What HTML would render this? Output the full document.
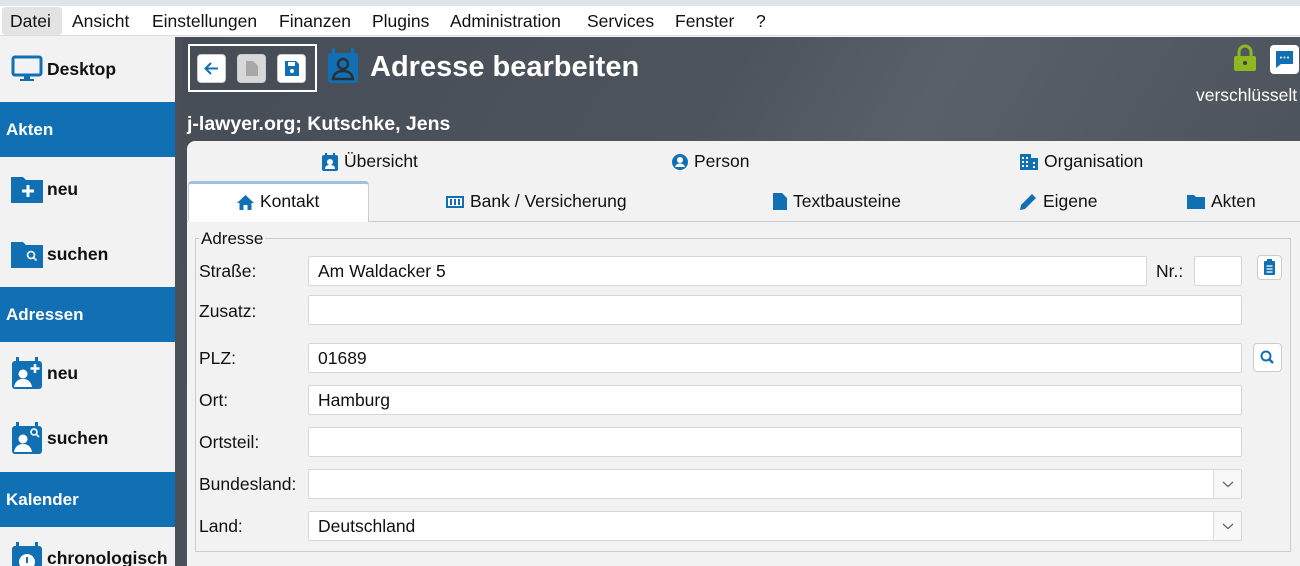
<!DOCTYPE html>
<html><head><meta charset="utf-8"><style>
*{box-sizing:border-box;margin:0;padding:0}
html,body{width:1300px;height:566px;overflow:hidden}
body{font-family:"Liberation Sans",sans-serif;background:#f2f2f2;position:relative;color:#111}
.abs{position:absolute}
#top{left:0;top:0;width:1300px;height:6px;background:#dfe4ec}
#menu{left:0;top:6px;width:1300px;height:30px;background:#fff;border-bottom:1px solid #ddd;font-size:17.5px}
#menu span{position:absolute;top:5px}
#side{left:0;top:37px;width:175px;height:529px;background:#f2f2f2}
#gap{left:175px;top:37px;width:8px;height:529px;background:#4a4f58}
.sh{position:absolute;left:0;width:175px;height:55px;background:#1170b4;color:#fff;font-weight:bold;font-size:17px;padding:18px 0 0 6px}
.si{position:absolute;left:11px;font-weight:bold;font-size:17.5px;display:flex;align-items:center;gap:4px}
#hdr{left:183px;top:37px;width:1117px;height:529px;background:linear-gradient(120deg,#474d57 0%,#4e545e 40%,#5a606a 55%,#464c56 100%)}
.tb{position:absolute;top:54px;width:29px;height:29px;background:#fff;border-radius:4px;border:1px solid #ccc}
#panel{left:187px;top:141px;width:1113px;height:425px;background:#f2f2f2;border-top-left-radius:8px}
.tab{position:absolute;font-size:17.5px;display:flex;align-items:center;gap:6px;color:#111}
.lbl{position:absolute;left:199px;font-size:17.5px}
.inp{position:absolute;background:#fff;border:1px solid #d6d6d6;border-radius:2px;height:30px;font-size:17.5px;padding:4px 0 0 9px}
.dd{position:absolute;right:0;top:0;width:28px;height:28px;background:#f8f8f8;border-left:1px solid #ddd}
</style></head><body>
<div id="top" class="abs"></div>
<div id="menu" class="abs">
<div class="abs" style="left:2px;top:1px;width:60px;height:28px;background:#e3e3e3;border-radius:3px"></div>
<span style="left:10px">Datei</span><span style="left:72px">Ansicht</span><span style="left:152px">Einstellungen</span><span style="left:279px">Finanzen</span><span style="left:372px">Plugins</span><span style="left:450px">Administration</span><span style="left:587px">Services</span><span style="left:675px">Fenster</span><span style="left:756px">?</span>
</div>
<div id="side" class="abs">
<div class="si" style="top:18px"><svg width="32" height="28" viewBox="0 0 32 28"><rect x="2" y="2" width="28" height="18" rx="2" fill="none" stroke="#1170b4" stroke-width="3"/><rect x="13" y="21" width="6" height="3" fill="#1170b4"/><rect x="9" y="24" width="14" height="2" fill="#1170b4"/></svg>Desktop</div>
<div class="sh" style="top:65px">Akten</div>
<div class="si" style="top:138px"><svg width="32" height="28" viewBox="0 0 32 28"><path d="M0 2h12l3 3h17v23H0z" fill="#1170b4"/><path d="M17 10v12M11 16h12" stroke="#fff" stroke-width="3"/></svg>neu</div>
<div class="si" style="top:203px"><svg width="32" height="28" viewBox="0 0 32 28"><path d="M0 2h12l3 3h17v23H0z" fill="#1170b4"/><circle cx="20" cy="15" r="3.5" fill="none" stroke="#fff" stroke-width="1.6"/><path d="M22.5 17.5l3 3" stroke="#fff" stroke-width="1.6"/></svg>suchen</div>
<div class="sh" style="top:250px">Adressen</div>
<div class="si" style="top:320px"><svg width="32" height="32" viewBox="0 0 32 32"><rect x="1" y="4" width="30" height="28" rx="3" fill="#1170b4"/><rect x="5" y="0" width="3" height="6" fill="#1170b4"/><rect x="24" y="0" width="3" height="6" fill="#1170b4"/><circle cx="12" cy="17" r="4.5" fill="#fff"/><path d="M3 30c1-6 5-8 9-8s8 2 9 8z" fill="#fff"/><path d="M24 7v9M19.5 11.5h9" stroke="#fff" stroke-width="2.5"/></svg>neu</div>
<div class="si" style="top:385px"><svg width="32" height="32" viewBox="0 0 32 32"><rect x="1" y="4" width="30" height="28" rx="3" fill="#1170b4"/><rect x="5" y="0" width="3" height="6" fill="#1170b4"/><rect x="24" y="0" width="3" height="6" fill="#1170b4"/><circle cx="12" cy="17" r="4.5" fill="#fff"/><path d="M3 30c1-6 5-8 9-8s8 2 9 8z" fill="#fff"/><circle cx="23" cy="10" r="3" fill="none" stroke="#fff" stroke-width="1.6"/><path d="M25 12l3 3" stroke="#fff" stroke-width="1.6"/></svg>suchen</div>
<div class="sh" style="top:435px">Kalender</div>
<div class="si" style="top:505px"><svg width="32" height="32" viewBox="0 0 32 32"><rect x="1" y="4" width="30" height="28" rx="3" fill="#1170b4"/><rect x="5" y="0" width="3" height="6" fill="#1170b4"/><rect x="24" y="0" width="3" height="6" fill="#1170b4"/><circle cx="16" cy="20" r="8" fill="#fff"/><path d="M16 15v6" stroke="#1170b4" stroke-width="2"/></svg>chronologisch</div>
</div>
<div id="gap" class="abs"></div>
<div id="hdr" class="abs"></div>
<div class="abs" style="left:188px;top:44px;width:129px;height:48px;border:2px solid #fff"></div>
<div class="tb" style="left:197px"><svg width="27" height="27" viewBox="0 0 27 27"><path d="M20 13.5H8M13 8l-5.5 5.5L13 19" fill="none" stroke="#1170b4" stroke-width="2"/></svg></div>
<div class="tb" style="left:237px;background:#d8d8d8"><svg width="27" height="27" viewBox="0 0 27 27"><path d="M8 6h7l5 5v10H8z" fill="#a8a8a8"/></svg></div>
<div class="tb" style="left:277px"><svg width="27" height="27" viewBox="0 0 27 27"><path d="M7 6h11l3 3v12H7z" fill="#1170b4"/><rect x="10" y="7" width="7" height="4" fill="#fff"/><circle cx="14" cy="16" r="2" fill="#fff"/></svg></div>
<svg class="abs" style="left:327px;top:48px" width="32" height="36" viewBox="0 0 32 36"><rect x="1" y="5" width="30" height="30" rx="3" fill="#1170b4"/><rect x="5" y="0" width="3" height="7" fill="#1170b4"/><rect x="24" y="0" width="3" height="7" fill="#1170b4"/><circle cx="16" cy="16" r="5" fill="none" stroke="#2b2f36" stroke-width="2.5"/><path d="M6 31c1-6 5-8 10-8s9 2 10 8z" fill="none" stroke="#2b2f36" stroke-width="2.5"/></svg>
<div class="abs" style="left:370px;top:51px;color:#fff;font-weight:bold;font-size:29px">Adresse bearbeiten</div>
<div class="abs" style="left:187px;top:113px;color:#fff;font-weight:bold;font-size:19.5px">j-lawyer.org; Kutschke, Jens</div>
<svg class="abs" style="left:1233px;top:44px" width="24" height="28" viewBox="0 0 24 28"><path d="M6 12V8a6 6 0 0 1 12 0v4" fill="none" stroke="#8db822" stroke-width="3"/><rect x="1" y="12" width="22" height="15" rx="2" fill="#8db822"/><circle cx="12" cy="19" r="2" fill="#3a3f47"/></svg>
<div class="abs" style="left:1270px;top:45px;width:29px;height:29px;background:#fff;border-radius:4px"><svg width="29" height="29" viewBox="0 0 29 29"><path d="M6 6h17v13H11l-5 4z" fill="#1170b4"/><circle cx="11" cy="12.5" r="1" fill="#fff"/><circle cx="14.5" cy="12.5" r="1" fill="#fff"/><circle cx="18" cy="12.5" r="1" fill="#fff"/></svg></div>
<div class="abs" style="left:1196px;top:85px;color:#fff;font-size:17.5px">verschlüsselt</div>
<div id="panel" class="abs"></div>
<div class="tab" style="left:322px;top:151px"><svg width="16" height="18" viewBox="0 0 16 18"><rect x="0" y="2" width="16" height="16" rx="2" fill="#1170b4"/><rect x="3" y="0" width="2" height="3" fill="#1170b4"/><rect x="11" y="0" width="2" height="3" fill="#1170b4"/><circle cx="8" cy="9" r="3" fill="#fff"/><path d="M3 16c0-3 2-4 5-4s5 1 5 4z" fill="#fff"/></svg>Übersicht</div>
<div class="tab" style="left:672px;top:151px"><svg width="16" height="16" viewBox="0 0 16 16"><circle cx="8" cy="8" r="8" fill="#1170b4"/><circle cx="8" cy="6" r="3" fill="#fff"/><path d="M3 13c1-3 3-3.5 5-3.5s4 .5 5 3.5" fill="#fff"/></svg>Person</div>
<div class="tab" style="left:1020px;top:151px"><svg width="18" height="16" viewBox="0 0 18 16"><rect x="0" y="0" width="11" height="16" fill="#1170b4"/><rect x="11" y="4" width="7" height="12" fill="#1170b4"/><g fill="#fff"><rect x="2" y="3" width="2" height="2"/><rect x="6" y="3" width="2" height="2"/><rect x="2" y="7" width="2" height="2"/><rect x="6" y="7" width="2" height="2"/><rect x="2" y="11" width="2" height="2"/><rect x="6" y="11" width="2" height="2"/><rect x="13" y="8" width="2" height="2"/><rect x="13" y="12" width="2" height="2"/></g></svg>Organisation</div>
<div class="abs" style="left:188px;top:181px;width:181px;height:41px;background:#fff;border-top:3px solid #9fc1e0;border-radius:4px 4px 0 0;border-right:1px solid #ccc;border-left:1px solid #ccc"></div>
<div class="abs" style="left:187px;top:221px;width:1113px;height:1px;background:#ccc"></div>
<div class="abs" style="left:188px;top:221px;width:180px;height:1px;background:#fff"></div>
<div class="tab" style="left:237px;top:191px"><svg width="17" height="16" viewBox="0 0 17 16"><path d="M8.5 1L0 9h2.5v7h4v-5h4v5h4V9H17z" fill="#1170b4"/></svg>Kontakt</div>
<div class="tab" style="left:446px;top:191px"><svg width="18" height="14" viewBox="0 0 18 14"><rect x="0" y="1" width="18" height="12" fill="#1170b4"/><rect x="2" y="3" width="14" height="8" fill="#fff"/><g fill="#1170b4"><rect x="4" y="4" width="2" height="6"/><rect x="8" y="4" width="2" height="6"/><rect x="12" y="4" width="2" height="6"/></g></svg>Bank / Versicherung</div>
<div class="tab" style="left:773px;top:191px"><svg width="14" height="17" viewBox="0 0 14 17"><path d="M0 0h9l5 5v12H0z" fill="#1170b4"/></svg>Textbausteine</div>
<div class="tab" style="left:1020px;top:191px"><svg width="17" height="17" viewBox="0 0 17 17"><path d="M0 17l1-5L12 1l4 4L5 16z" fill="#1170b4"/></svg>Eigene</div>
<div class="tab" style="left:1187px;top:191px"><svg width="18" height="15" viewBox="0 0 18 15"><path d="M0 1h7l2 2h9v12H0z" fill="#1170b4"/></svg>Akten</div>
<div class="abs" style="left:195px;top:238px;width:1096px;height:314px;border:1px solid #ccc"></div>
<div class="abs" style="left:199px;top:229px;font-size:17px;background:#f2f2f2;padding:0 2px">Adresse</div>
<div class="lbl" style="top:261px">Straße:</div>
<div class="inp" style="left:308px;top:256px;width:839px">Am Waldacker 5</div>
<div class="abs" style="left:1156px;top:261px;font-size:17.5px">Nr.:</div>
<div class="inp" style="left:1194px;top:256px;width:48px"></div>
<div class="abs" style="left:1257px;top:255px;width:25px;height:25px;background:#fff;border:1px solid #ccc;border-radius:4px"><svg width="23" height="23" viewBox="0 0 23 23"><rect x="6" y="5" width="11" height="14" rx="1" fill="#1170b4"/><rect x="9" y="3" width="5" height="4" fill="#1170b4"/><path d="M8.5 10h6M8.5 13h6M8.5 16h6" stroke="#fff" stroke-width="1.2"/></svg></div>
<div class="lbl" style="top:301px">Zusatz:</div>
<div class="inp" style="left:308px;top:295px;width:934px"></div>
<div class="lbl" style="top:348px">PLZ:</div>
<div class="inp" style="left:308px;top:343px;width:934px">01689</div>
<div class="abs" style="left:1253px;top:343px;width:29px;height:29px;background:#fff;border:1px solid #ccc;border-radius:4px"><svg width="27" height="27" viewBox="0 0 27 27"><circle cx="12" cy="12" r="4.5" fill="none" stroke="#1170b4" stroke-width="2"/><path d="M15 15l4 4" stroke="#1170b4" stroke-width="2.5"/></svg></div>
<div class="lbl" style="top:390px">Ort:</div>
<div class="inp" style="left:308px;top:385px;width:934px">Hamburg</div>
<div class="lbl" style="top:432px">Ortsteil:</div>
<div class="inp" style="left:308px;top:427px;width:934px"></div>
<div class="lbl" style="top:474px">Bundesland:</div>
<div class="inp" style="left:308px;top:469px;width:934px"><div class="dd"><svg width="28" height="28" viewBox="0 0 28 28"><path d="M9 12l5 4.5 5-4.5" fill="none" stroke="#666" stroke-width="1.3"/></svg></div></div>
<div class="lbl" style="top:516px">Land:</div>
<div class="inp" style="left:308px;top:511px;width:934px">Deutschland<div class="dd"><svg width="28" height="28" viewBox="0 0 28 28"><path d="M9 12l5 4.5 5-4.5" fill="none" stroke="#666" stroke-width="1.3"/></svg></div></div>
</body></html>
